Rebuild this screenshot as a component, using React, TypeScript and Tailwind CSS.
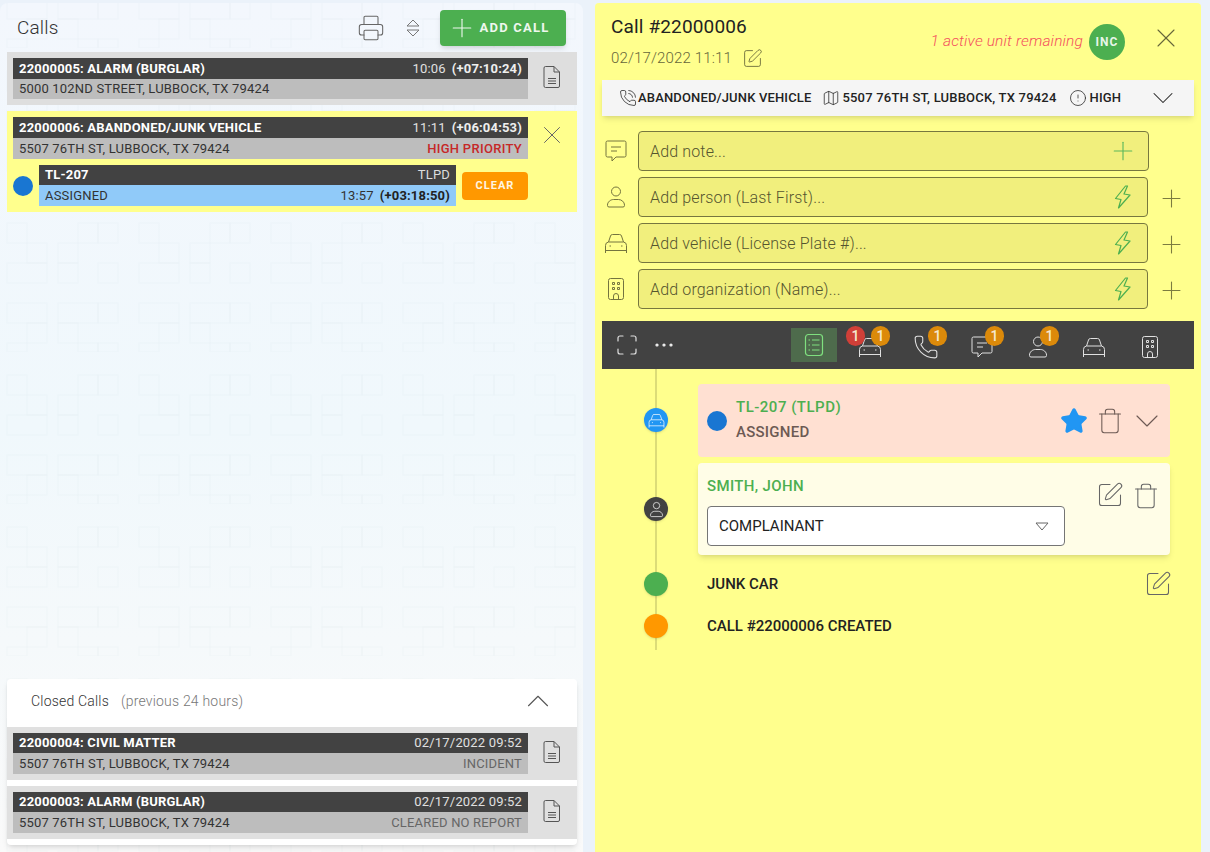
import React from "react";
import { ChevronDown, ChevronUp, Plus, X, Star, Trash, Printer, SquarePen, Ellipsis, Phone, Map, CircleAlert, PhoneCall, Maximize } from "lucide-react";

const font = { fontFamily: "Roboto, sans-serif" };

type IconProps = { className?: string; size?: number };

const DocIcon = ({ className }: IconProps) => (
  <svg width="20" height="24" viewBox="0 0 20 24" fill="none" stroke="currentColor" className={className}>
    <path d="M3.5 1.5H12L17.5 7v14a1.5 1.5 0 0 1-1.5 1.5H3.5A1.5 1.5 0 0 1 2 21V3a1.5 1.5 0 0 1 1.5-1.5z" />
    <path d="M12 1.5V7h5.5M6 13.5h8M6 16h8M6 18.5h8" />
  </svg>
);

const ChatIcon = ({ className, size = 24 }: IconProps) => (
  <svg width={size} height={size} viewBox="0 0 24 24" fill="none" stroke="currentColor" className={className}>
    <path d="M3.5 2h17A1.5 1.5 0 0 1 22 3.5v13a1.5 1.5 0 0 1-1.5 1.5H12l-4 4v-4H3.5A1.5 1.5 0 0 1 2 16.5v-13A1.5 1.5 0 0 1 3.5 2z" />
    <path d="M7 8h10M7 12h6" />
  </svg>
);

const PersonIcon = ({ className, size = 24 }: IconProps) => (
  <svg width={size} height={size} viewBox="0 0 24 24" fill="none" stroke="currentColor" className={className}>
    <circle cx="12" cy="6.5" r="4.5" />
    <path d="M3.5 20.5v-.5c0-3 3-5.5 6-5.5h5c3 0 6 2.500 6 5.500v.5a1.500 1.500 0 0 1-1.500 1.500H5a1.500 1.500 0 0 1-1.500-1.500z" />
  </svg>
);

const CarIcon = ({ className, size = 24 }: IconProps) => (
  <svg width={size} height={size} viewBox="0 0 24 24" fill="none" stroke="currentColor" className={className}>
    <path d="M4.500 11l2-6a2 2 0 0 1 2-1.500h7a2 2 0 0 1 2 1.500l2 6" />
    <path d="M1.500 22v-7.500a3.500 3.500 0 0 1 3-3.500h15a3.500 3.500 0 0 1 3 3.500V22M1.500 19.500h21" />
    <path d="M5.500 15h1.500M17 15h1.500" />
  </svg>
);

const BuildingIcon = ({ className, size = 24 }: IconProps) => (
  <svg width={size} height={size} viewBox="0 0 24 24" fill="none" stroke="currentColor" className={className}>
    <rect x="4.500" y="1.500" width="15" height="21" rx="2" />
    <path d="M8.500 5.500h2v2h-2zM13.500 5.500h2v2h-2zM8.500 10.500h2v2h-2zM13.500 10.500h2v2h-2zM9.500 22.500v-3.500a2.500 2.500 0 0 1 5 0v3.500" />
  </svg>
);

const BoltIcon = () => (
  <svg width="20" height="24" viewBox="0 0 20 24" fill="none" stroke="#4caf50" strokeWidth="1.2" strokeLinejoin="round" className="shrink-0">
    <path d="M12.500 1L2.500 13.500l5.500 1-2.500 8.500 11.500-13-6-1 3.500-8z" />
  </svg>
);

const ListIcon = () => (
  <svg width="20" height="24" viewBox="0 0 20 24" fill="none" stroke="#7fe07f" strokeWidth="1.2" className="shrink-0">
    <rect x="1.500" y="1.500" width="17" height="21" rx="3" />
    <path d="M4.500 7h1.500M8 7h7.500M4.500 12h1.500M8 12h7.500M4.500 17h1.500M8 17h7.500" />
  </svg>
);

const CallBars = ({ title, time, elapsed, address, note, noteClass, headClass = "h-[21px]", subClass = "h-[20px]" }: { title: string; time: string; elapsed?: string; address: string; note?: string; noteClass?: string; headClass?: string; subClass?: string }) => (
  <div className="w-[515px] tracking-[0.18px]">
    <div className={`flex items-center justify-between bg-[#424242] px-[6px] text-[13px] text-white ${headClass}`}>
      <span className="font-bold">{title}</span>
      <span className="text-[#e0e0e0]">
        {time}
        {elapsed && <b className="ml-[6px] font-bold text-[#eeeeee]">{elapsed}</b>}
      </span>
    </div>
    <div className={`flex items-center justify-between bg-[#bdbdbd] px-[6px] text-[13px] text-[#333] ${subClass}`}>
      <span>{address}</span>
      {note && <span className={noteClass}>{note}</span>}
    </div>
  </div>
);

const DocRow = ({ bg = "bg-[#dedede]", ...props }: { title: string; time: string; elapsed?: string; address: string; note?: string; noteClass?: string; bg?: string; headClass?: string; subClass?: string }) => (
  <div className={`flex h-[53px] items-start px-[6px] pt-[6px] ${bg}`}>
    <CallBars {...props} />
    <DocIcon className="ml-[14px] mt-[7px] text-[#555]" />
  </div>
);

const InputRow = ({ icon, text, action, extra }: { icon: React.ReactNode; text: string; action: React.ReactNode; extra: boolean }) => (
  <div className="flex items-center">
    <div className="mr-[8px] flex w-[28px] justify-center text-[#74743f]">{icon}</div>
    <div className={`flex h-[40px] items-center justify-between rounded border border-[#77773f] bg-[#f1ef7d] pl-[11px] pr-[14px] text-[16px] font-light tracking-[0.15px] text-[#55552f] ${extra ? "w-[510px]" : "w-[511px]"}`}>
      <span className="pt-[1px]">{text}</span>
      {action}
    </div>
    {extra && <Plus size={29} strokeWidth={0.9} className="ml-[9px] mt-[3px] shrink-0 text-[#7c7c40]" />}
  </div>
);

const Badge = ({ red, className }: { red?: boolean; className: string }) => (
  <span className={`absolute flex h-[20px] w-[19px] items-center justify-center rounded-full text-[14px] font-medium text-[#f5e9d0] ${red ? "bg-[#d13f38]" : "bg-[#dc8a0a]"} ${className}`}>1</span>
);

const TimelineDot = ({ className, children }: { className: string; children?: React.ReactNode }) => (
  <span className={`relative z-10 flex h-[24px] w-[24px] items-center justify-center rounded-full shadow-sm ${className}`}>{children}</span>
);

const TabIcon = ({ children }: { children: React.ReactNode }) => (
  <div className="relative ml-[8px] flex h-[48px] w-[48px] items-center justify-center pt-[3px]">{children}</div>
);

const tiles = [
  [7, 23, 20, 20], [78, 23, 20, 20], [98, 23, 20, 20], [27, 43, 20, 20], [58, 43, 20, 20], [7, 63, 40, 20], [58, 63, 20, 20], [98, 63, 20, 20],
  [7, 103, 40, 20], [58, 103, 40, 20], [98, 103, 20, 20], [27, 123, 20, 20], [58, 123, 20, 20], [7, 143, 20, 9], [78, 143, 20, 9], [98, 143, 20, 9],
];

export default function App() {
  return (
    <div style={font} className="flex h-[852px] w-[1210px] overflow-hidden bg-[#ebf2fa] text-[#222]">
      <div className="relative mt-[3px] flex w-[583px] flex-col rounded-t-lg bg-gradient-to-b from-[#f3f7fd] via-[#f0f8fc] to-[#fafafa] pl-[7px] pr-[6px] pt-[7px]">
        <svg className="absolute inset-0 h-full w-full" aria-hidden="true">
          <defs>
            <pattern id="tile" width="132" height="152" patternUnits="userSpaceOnUse" patternTransform="translate(0 45)">
              {tiles.map(([x, y, w, h]) => (
                <rect key={`${x}-${y}`} x={x} y={y} width={w} height={h} fill="none" stroke="#9fb4c4" strokeOpacity="0.05" />
              ))}
            </pattern>
          </defs>
          <rect width="100%" height="100%" fill="url(#tile)" />
        </svg>
        <div className="relative mb-[6px] flex h-[36px] items-center pl-[10px] pr-[11px]">
          <h1 className="text-[19px] font-light tracking-[0.15px] text-[#333]">Calls</h1>
          <Printer size={28} strokeWidth={0.9} className="ml-auto text-[#666]" />
          <svg width="16" height="20" viewBox="0 0 16 20" fill="none" stroke="#777" className="ml-[20px] mr-[19px]"><path d="M2 8l6-6 6 6zM2 12l6 6 6-6z" /></svg>
          <button className="flex h-[36px] w-[126px] items-center justify-center gap-[3px] rounded bg-[#4caf50] pr-[10px] text-[13px] font-bold tracking-[1.2px] text-[#eef7ee] shadow-md">
            <Plus size={30} strokeWidth={0.9} className="shrink-0" />
            ADD CALL
          </button>
        </div>
        <div className="relative">
          <DocRow title="22000005: ALARM (BURGLAR)" time="10:06" elapsed="(+07:10:24)" address="5000 102ND STREET, LUBBOCK, TX 79424" />
        </div>
        <div className="relative mt-[6px] flex h-[101px] bg-[#ffff8d] px-[6px] pt-[6px]">
          <div>
            <CallBars subClass="h-[21px]" title="22000006: ABANDONED/JUNK VEHICLE" time="11:11" elapsed="(+06:04:53)" address="5507 76TH ST, LUBBOCK, TX 79424" note="HIGH PRIORITY" noteClass="font-medium tracking-[0.3px] text-[#c62828]" />
            <div className="mt-[6px] flex items-center">
              <span className="h-[20px] w-[20px] rounded-full bg-[#1976d2]" />
              <div className="ml-[6px] w-[417px] tracking-[0.18px]">
                <div className="flex h-[20px] items-center justify-between bg-[#424242] px-[6px] text-[13px] text-white">
                  <b className="font-bold">TL-207</b>
                  <span className="text-[#ddd]">TLPD</span>
                </div>
                <div className="flex h-[21px] items-center justify-between bg-[#90caf9] px-[6px] text-[13px] text-[#333]">
                  <span>ASSIGNED</span>
                  <span>13:57<b className="ml-[6px] font-bold text-[#222]">(+03:18:50)</b></span>
                </div>
              </div>
              <button className="ml-[6px] h-[28px] w-[66px] rounded bg-[#ff9800] pt-[1px] text-[11px] font-bold tracking-[1px] text-[#fff5e0]">CLEAR</button>
            </div>
          </div>
          <X size={30} strokeWidth={0.8} className="ml-[9px] mt-[3px] shrink-0 text-[#666]" />
        </div>
        <div className="relative mb-[7px] mt-auto rounded bg-white pb-[6px] shadow-md">
          <div className="flex h-[48px] items-center justify-between pb-[4px] pl-[24px] pr-[20px] text-[14px] font-light tracking-[0.2px]">
            <span className="text-[#333]">Closed Calls<span className="ml-[12px] text-[#777]">(previous 24 hours)</span></span>
            <ChevronUp size={38} strokeWidth={0.7} className="shrink-0 text-[#555]" />
          </div>
          <DocRow bg="bg-[#e0e0e0]" headClass="h-[20px]" subClass="h-[21px]" title="22000004: CIVIL MATTER" time="02/17/2022 09:52" address="5507 76TH ST, LUBBOCK, TX 79424" note="INCIDENT" noteClass="text-[#666]" />
          <div className="mt-[6px]">
            <DocRow bg="bg-[#e0e0e0]" headClass="h-[20px]" subClass="h-[21px]" title="22000003: ALARM (BURGLAR)" time="02/17/2022 09:52" address="5507 76TH ST, LUBBOCK, TX 79424" note="CLEARED NO REPORT" noteClass="text-[#666]" />
          </div>
        </div>
      </div>

      <div className="ml-[12px] mt-[3px] flex h-[849px] w-[606px] flex-col rounded-t bg-[#ffff8d] px-[7px]">
        <div className="flex h-[77px] items-start justify-between">
          <div className="pl-[9px] pt-[12px]">
            <h2 className="text-[19px] leading-[24px] tracking-[0.15px] text-[#222]">Call #22000006</h2>
            <div className="mt-[8px] flex items-center gap-[10px] text-[15px] font-light tracking-[0.15px] text-[#66663a]">
              02/17/2022 11:11
              <SquarePen size={21} strokeWidth={0.9} className="text-[#55552f]" />
            </div>
          </div>
          <div className="flex items-center pr-[12px] pt-[21px]">
            <i className="mr-[6px] text-[15.5px] font-light tracking-[0.15px] text-[#f44f5e]">1 active unit remaining</i>
            <span className="flex h-[36px] w-[36px] shrink-0 items-center justify-center rounded-full bg-[#4caf50] text-[12px] font-bold tracking-[1px] text-[#e8f5e9]">INC</span>
            <X size={32} strokeWidth={0.8} className="-mt-[8px] ml-[25px] shrink-0 text-[#66663a]" />
          </div>
        </div>
        <div className="flex h-[36px] w-[592px] items-center bg-[#f5f5f5] pl-[17px] pr-[13px] text-[13px] font-medium tracking-[0.2px] text-[#222] shadow-md">
          <PhoneCall size={18} strokeWidth={1} className="mr-[1px] shrink-0" />
          <span className="tracking-[0.15px]">ABANDONED/JUNK VEHICLE</span>
          <Map size={18} strokeWidth={1} className="ml-[11px] mr-[2px] shrink-0" />
          5507 76TH ST, LUBBOCK, TX 79424
          <CircleAlert size={18} strokeWidth={1} className="ml-[12px] mr-[3px] shrink-0" />
          HIGH
          <ChevronDown size={36} strokeWidth={0.7} className="ml-auto shrink-0" />
        </div>
        <div className="mt-[15px] flex flex-col gap-[6px]">
          <InputRow icon={<ChatIcon />} text="Add note..." extra={false} action={<Plus size={30} strokeWidth={0.9} className="-mr-[4px] shrink-0 text-[#5cb85c]" />} />
          <InputRow icon={<PersonIcon />} text="Add person (Last First)..." extra action={<BoltIcon />} />
          <InputRow icon={<CarIcon />} text="Add vehicle (License Plate #)..." extra action={<BoltIcon />} />
          <InputRow icon={<BuildingIcon />} text="Add organization (Name)..." extra action={<BoltIcon />} />
        </div>
        <div className="mt-[12px] flex h-[48px] w-[592px] items-center bg-[#424242] pl-[13px] text-[#e0e0e0]">
          <Maximize size={24} strokeWidth={1.2} className="shrink-0" />
          <Ellipsis size={24} strokeWidth={1.2} className="ml-[13px] shrink-0 text-white" />
          <div className="ml-[115px] flex h-[34px] w-[46px] items-center justify-center bg-[#4e6b4c]">
            <ListIcon />
          </div>
          <div className="relative ml-[9px] flex h-[48px] w-[48px] items-center justify-center pt-[3px]">
            <CarIcon />
            <Badge red className="left-[0px] top-[5px]" />
            <Badge className="left-[25px] top-[5px]" />
          </div>
          <TabIcon><Phone size={26} strokeWidth={1} /><Badge className="left-[26px] top-[5px]" /></TabIcon>
          <TabIcon><ChatIcon /><Badge className="left-[27px] top-[5px]" /></TabIcon>
          <TabIcon><PersonIcon /><Badge className="left-[26px] top-[5px]" /></TabIcon>
          <TabIcon><CarIcon /></TabIcon>
          <TabIcon><BuildingIcon /></TabIcon>
        </div>
        <div className="relative pl-[96px] pt-[15px]">
          <span className="absolute bottom-[-11px] left-[53px] top-0 w-[2px] bg-[#dcdc78]" />
          <div className="relative flex h-[73px] w-[472px] items-center rounded bg-[#ffe0d2] pl-[9px] pr-[3px]">
            <span className="absolute left-[-54px] top-[24px]"><TimelineDot className="bg-[#2196f3] text-white"><CarIcon size={17} /></TimelineDot></span>
            <span className="h-[20px] w-[20px] rounded-full bg-[#1976d2]" />
            <div className="ml-[9px] pb-[2px] text-[15px] font-medium leading-[25px]">
              <div className="tracking-[0.5px] text-[#4caf50]">TL-207 (TLPD)</div>
              <div className="tracking-[0.25px] text-[#6d5a54]">ASSIGNED</div>
            </div>
            <Star size={28} fill="#2196f3" className="ml-auto shrink-0 text-[#2196f3]" />
            <Trash size={28} strokeWidth={0.9} className="ml-[8px] shrink-0 text-[#6d5a54]" />
            <ChevronDown size={40} strokeWidth={0.7} className="ml-[3px] shrink-0 text-[#6d5a54]" />
          </div>
          <div className="relative mt-[6px] flex h-[92px] w-[472px] rounded bg-[#fffde7] pl-[9px] pr-[10px] shadow-md">
            <span className="absolute left-[-54px] top-[34px]"><TimelineDot className="bg-[#424242] text-white"><PersonIcon size={17} /></TimelineDot></span>
            <div className="pt-[13px]">
              <div className="text-[15px] font-medium leading-[20px] tracking-[0.35px] text-[#4caf50]">SMITH, JOHN</div>
              <div className="mt-[10px] flex h-[40px] w-[358px] items-center justify-between rounded border border-[#757575] bg-white pl-[11px] pr-[15px] text-[15px] text-[#222]">
                COMPLAINANT
                <svg width="14" height="9" viewBox="0 0 14 9" fill="none" stroke="#666"><path d="M1 1h12L7 8z" /></svg>
              </div>
            </div>
            <SquarePen size={28} strokeWidth={0.9} className="ml-auto mt-[18px] shrink-0 text-[#666]" />
            <Trash size={28} strokeWidth={0.9} className="ml-[8px] mt-[19px] shrink-0 text-[#666]" />
          </div>
          <div className="relative mt-[16px] flex h-[26px] w-[472px] items-center justify-between pl-[9px] text-[15px] font-medium text-[#222]">
            <span className="absolute left-[-54px] top-[1px]"><TimelineDot className="bg-[#4caf50]" /></span>
            JUNK CAR
            <SquarePen size={28} strokeWidth={0.9} className="-mr-[2px] shrink-0 text-[#666]" />
          </div>
          <div className="relative mt-[16px] flex h-[26px] items-center pl-[9px] text-[15px] font-medium text-[#222]">
            <span className="absolute left-[-54px] top-[1px]"><TimelineDot className="bg-[#ff9800]" /></span>
            CALL #22000006 CREATED
          </div>
        </div>
      </div>
    </div>
  );
}
